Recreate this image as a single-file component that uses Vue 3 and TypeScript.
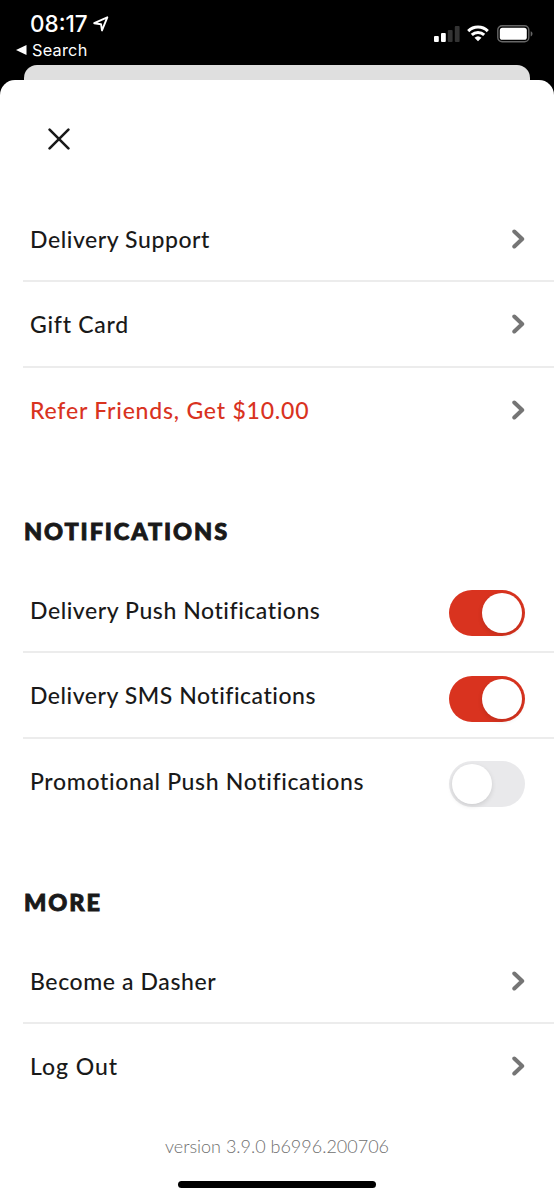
<script setup lang="ts">
import { ref } from 'vue'

interface LinkItem {
  label: string
  tracking: number
  accent?: boolean
}

interface ToggleItem {
  label: string
  tracking: number
  on: boolean
}

const links: LinkItem[] = [
  { label: 'Delivery Support', tracking: 0.57 },
  { label: 'Gift Card', tracking: 0.75 },
  { label: 'Refer Friends, Get $10.00', tracking: 0.79, accent: true },
]

const toggles = ref<ToggleItem[]>([
  { label: 'Delivery Push Notifications', tracking: 0.56, on: true },
  { label: 'Delivery SMS Notifications', tracking: 0.53, on: true },
  { label: 'Promotional Push Notifications', tracking: 0.65, on: false },
])

const more: LinkItem[] = [
  { label: 'Become a Dasher', tracking: 0.6 },
  { label: 'Log Out', tracking: 0.95 },
]
</script>

<template>
  <div class="screen">
    <header class="status">
      <div class="status-left">
        <div class="clock">
          <span class="time">08:17</span>
          <svg class="location" width="16" height="16" viewBox="0 0 16 16">
            <path d="M1.2 7.2 14.3 1.3 9 14.4 8 8.2Z" />
          </svg>
        </div>
        <div class="back">
          <svg width="11" height="10" viewBox="0 0 11 10"><path d="M0 5 10.5 0V10Z" fill="#fff" /></svg>
          <span class="back-label">Search</span>
        </div>
      </div>
      <div class="status-right">
        <svg width="26" height="17" viewBox="0 0 26 17">
          <rect x="0" y="10" width="4.8" height="6" rx="1" fill="#fff" />
          <rect x="7" y="7" width="4.8" height="9" rx="1" fill="#fff" />
          <rect x="13.8" y="4" width="4.8" height="12" rx="1" fill="#333" />
          <rect x="20.8" y="0" width="4.8" height="16" rx="1" fill="#333" />
        </svg>
        <svg class="wifi" width="22" height="17" viewBox="0 0 22 17">
          <path d="M1.2 6.1a14 14 0 0 1 19.6 0M4.8 9.9a9 9 0 0 1 12.4 0" fill="none" stroke="#fff" stroke-width="3" />
          <path d="M7.5 12.8a5.2 5.2 0 0 1 7 0L11 16.3Z" fill="#fff" />
        </svg>
        <svg class="battery" width="36" height="18" viewBox="0 0 36 18">
          <rect x=".8" y=".8" width="31" height="16" rx="4.3" fill="none" stroke="#666" stroke-width="1.4" />
          <rect x="2.8" y="2.8" width="27" height="12" rx="2.6" fill="#fff" />
          <path d="M33.7 6.2c2.4.8 2.4 4.4 0 5.2Z" fill="#666" />
        </svg>
      </div>
    </header>
    <div class="under-sheet"></div>
    <main class="sheet">
      <button class="close" aria-label="Close">
        <svg width="22" height="22" viewBox="0 0 22 22"><path d="M1.6 1.6 20.4 20.4M20.4 1.6 1.6 20.4" /></svg>
      </button>
      <section class="group links">
        <div v-for="item in links" :key="item.label" class="row" :class="{ accent: item.accent }">
          <span class="label" :style="{ letterSpacing: item.tracking + 'px' }">{{ item.label }}</span>
          <svg class="chevron" width="13" height="20" viewBox="0 0 13 20"><path d="M2.3 2.5 10.2 10 2.3 17.5" /></svg>
        </div>
      </section>
      <h2 class="heading">NOTIFICATIONS</h2>
      <section class="group toggles">
        <div v-for="item in toggles" :key="item.label" class="row">
          <span class="label" :style="{ letterSpacing: item.tracking + 'px' }">{{ item.label }}</span>
          <button class="switch" :class="{ on: item.on }" role="switch" :aria-checked="item.on" @click="item.on = !item.on">
            <span class="knob"></span>
          </button>
        </div>
      </section>
      <h2 class="heading heading-more">MORE</h2>
      <section class="group more">
        <div v-for="item in more" :key="item.label" class="row">
          <span class="label" :style="{ letterSpacing: item.tracking + 'px' }">{{ item.label }}</span>
          <svg class="chevron" width="13" height="20" viewBox="0 0 13 20"><path d="M2.3 2.5 10.2 10 2.3 17.5" /></svg>
        </div>
      </section>
      <footer class="footer">
        <span class="version">version 3.9.0 b6996.200706</span>
        <div class="home-bar"></div>
      </footer>
    </main>
  </div>
</template>

<style>
body {
  margin: 0;
  background: #000;
}
</style>

<style scoped>
.screen {
  width: 554px;
  height: 1200px;
  overflow: hidden;
  background: #000;
  color: #191919;
  font-family: Lato, 'Open Sans', sans-serif;
  display: flex;
  flex-direction: column;
}
.status {
  height: 65px;
  flex: none;
  display: flex;
  justify-content: space-between;
  box-sizing: border-box;
  padding: 10px 21px 0 16px;
  color: #fff;
  font-family: Inter, sans-serif;
}
.clock {
  display: flex;
  align-items: center;
  height: 27px;
  padding-left: 14px;
}
.time {
  font-size: 22.5px;
  font-weight: 500;
  letter-spacing: 0;
}
.location {
  margin-left: 5px;
}
.location path {
  fill: none;
  stroke: #fff;
  stroke-width: 1.9;
  stroke-linejoin: round;
}
.back {
  display: flex;
  align-items: center;
  height: 26px;
}
.back-label {
  margin-left: 5px;
  font-size: 16.3px;
  font-weight: 400;
  letter-spacing: 0.25px;
}
.status-right {
  display: flex;
  align-items: flex-start;
  padding-top: 16px;
}
.wifi {
  margin-left: 7px;
  margin-top: -1px;
}
.battery {
  margin-left: 8px;
  margin-top: -1px;
}
.under-sheet {
  height: 15px;
  flex: none;
  margin: 0 24px;
  background: #dfdfdf;
  border-radius: 13px 13px 0 0;
}
.sheet {
  flex: 1;
  display: flex;
  flex-direction: column;
  background: #fff;
  border-radius: 15px 15px 0 0;
}
.close {
  width: 22px;
  height: 22px;
  margin: 48px 0 0 48px;
  padding: 0;
  border: 0;
  background: none;
}
.close svg {
  display: block;
}
.close path {
  stroke: #191919;
  stroke-width: 2.6;
  stroke-linecap: round;
}
.group {
  margin-left: 23px;
}
.links {
  margin-top: 46.4px;
}
.row {
  display: flex;
  align-items: center;
  justify-content: space-between;
  box-sizing: border-box;
  height: 85.7px;
  padding: 1px 29px 0 7px;
  border-bottom: 2px solid #ececec;
}
.row:last-child {
  border-bottom-color: transparent;
}
.label {
  font-size: 23px;
  font-weight: 500;
  line-height: 28px;
  white-space: nowrap;
}
.accent .label {
  color: #d9331f;
}
.chevron path {
  fill: none;
  stroke: #757575;
  stroke-width: 4;
  stroke-linecap: round;
  stroke-linejoin: round;
}
.heading {
  margin: 63.6px 0 0 24px;
  height: 28px;
  line-height: 28px;
  font-size: 23.5px;
  font-weight: 900;
  letter-spacing: 1.9px;
  -webkit-text-stroke: 0.9px currentColor;
}
.toggles {
  margin-top: 22.2px;
}
.toggles .row {
  padding-top: 4px;
}
.toggles .label {
  margin-bottom: 3px;
}
.switch {
  width: 76px;
  height: 46px;
  margin-top: 4px;
  padding: 3px;
  border: 0;
  border-radius: 23px;
  background: #e9e9eb;
  display: flex;
}
.switch.on {
  justify-content: flex-end;
  background: #d9331f;
}
.knob {
  width: 40px;
  height: 40px;
  border-radius: 50%;
  background: #fff;
  box-shadow: 0 2px 5px rgba(0, 0, 0, 0.12);
}
.heading-more {
  margin-top: 63.8px;
}
.more {
  margin-top: 22.3px;
}
.footer {
  display: flex;
  flex-direction: column;
  align-items: center;
  margin-top: 24.2px;
}
.version {
  font-size: 18px;
  line-height: 24px;
  font-weight: 300;
  color: #707070;
}
.home-bar {
  width: 198px;
  height: 7px;
  margin-top: 23.3px;
  border-radius: 4px;
  background: #000;
}
</style>
